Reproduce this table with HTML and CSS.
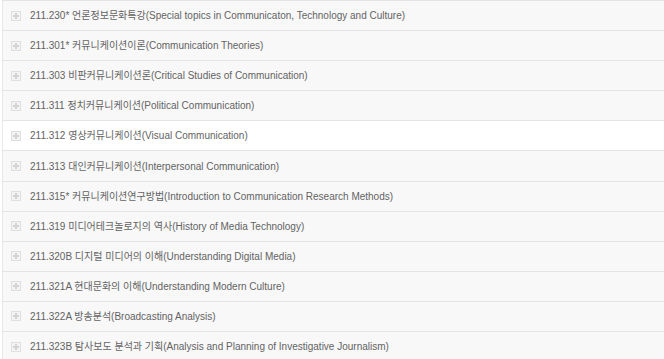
FILE: index.html
```html
<!DOCTYPE html>
<html lang="ko">
<head>
<meta charset="utf-8">
<link rel="stylesheet" href="styles.css">
</head>
<body>
<ul class="list">
  <li class="item"><span class="plus"></span><span class="label">211.230* 언론정보문화특강(Special topics in Communicaton, Technology and Culture)</span></li>
  <li class="item"><span class="plus"></span><span class="label">211.301* 커뮤니케이션이론(Communication Theories)</span></li>
  <li class="item"><span class="plus"></span><span class="label">211.303 비판커뮤니케이션론(Critical Studies of Communication)</span></li>
  <li class="item"><span class="plus"></span><span class="label">211.311 정치커뮤니케이션(Political Communication)</span></li>
  <li class="item active"><span class="plus"></span><span class="label">211.312 영상커뮤니케이션(Visual Communication)</span></li>
  <li class="item"><span class="plus"></span><span class="label">211.313 대인커뮤니케이션(Interpersonal Communication)</span></li>
  <li class="item"><span class="plus"></span><span class="label">211.315* 커뮤니케이션연구방법(Introduction to Communication Research Methods)</span></li>
  <li class="item"><span class="plus"></span><span class="label">211.319 미디어테크놀로지의 역사(History of Media Technology)</span></li>
  <li class="item"><span class="plus"></span><span class="label">211.320B 디지털 미디어의 이해(Understanding Digital Media)</span></li>
  <li class="item"><span class="plus"></span><span class="label">211.321A 현대문화의 이해(Understanding Modern Culture)</span></li>
  <li class="item"><span class="plus"></span><span class="label">211.322A 방송분석(Broadcasting Analysis)</span></li>
  <li class="item"><span class="plus"></span><span class="label">211.323B 탐사보도 분석과 기획(Analysis and Planning of Investigative Journalism)</span></li>
</ul>
</body>
</html>
```
FILE: styles.css
```css
html, body {
  margin: 0;
  padding: 0;
  background: #ffffff;
}
body {
  font-family: "Liberation Sans", "Noto Sans CJK KR", Arial, sans-serif;
  font-size: 10px;
  color: #636363;
  overflow: hidden;
}
.list {
  list-style: none;
  margin: 0 0 0 2px;
  padding: 0;
  border-top: 1px solid #e4e4e4;
}
.item {
  display: flex;
  align-items: center;
  height: 29.1px;
  padding-left: 8px;
  background: #f8f8f8;
  border-left: 1px solid #e8e8e8;
  border-bottom: 1px solid #e4e4e4;
}
.item.active {
  background: #ffffff;
}
.plus {
  position: relative;
  width: 8px;
  height: 8px;
  border: 1px solid #e0e0e0;
  background: #f3f3f3;
  margin-right: 9px;
  flex: none;
}
.plus::before,
.plus::after {
  content: "";
  position: absolute;
  background: #d4d4d4;
}
.plus::before {
  left: 1px;
  right: 1px;
  top: 3px;
  height: 2px;
}
.plus::after {
  top: 1px;
  bottom: 1px;
  left: 3px;
  width: 2px;
}
.label {
  white-space: nowrap;
  line-height: 13px;
}
```
